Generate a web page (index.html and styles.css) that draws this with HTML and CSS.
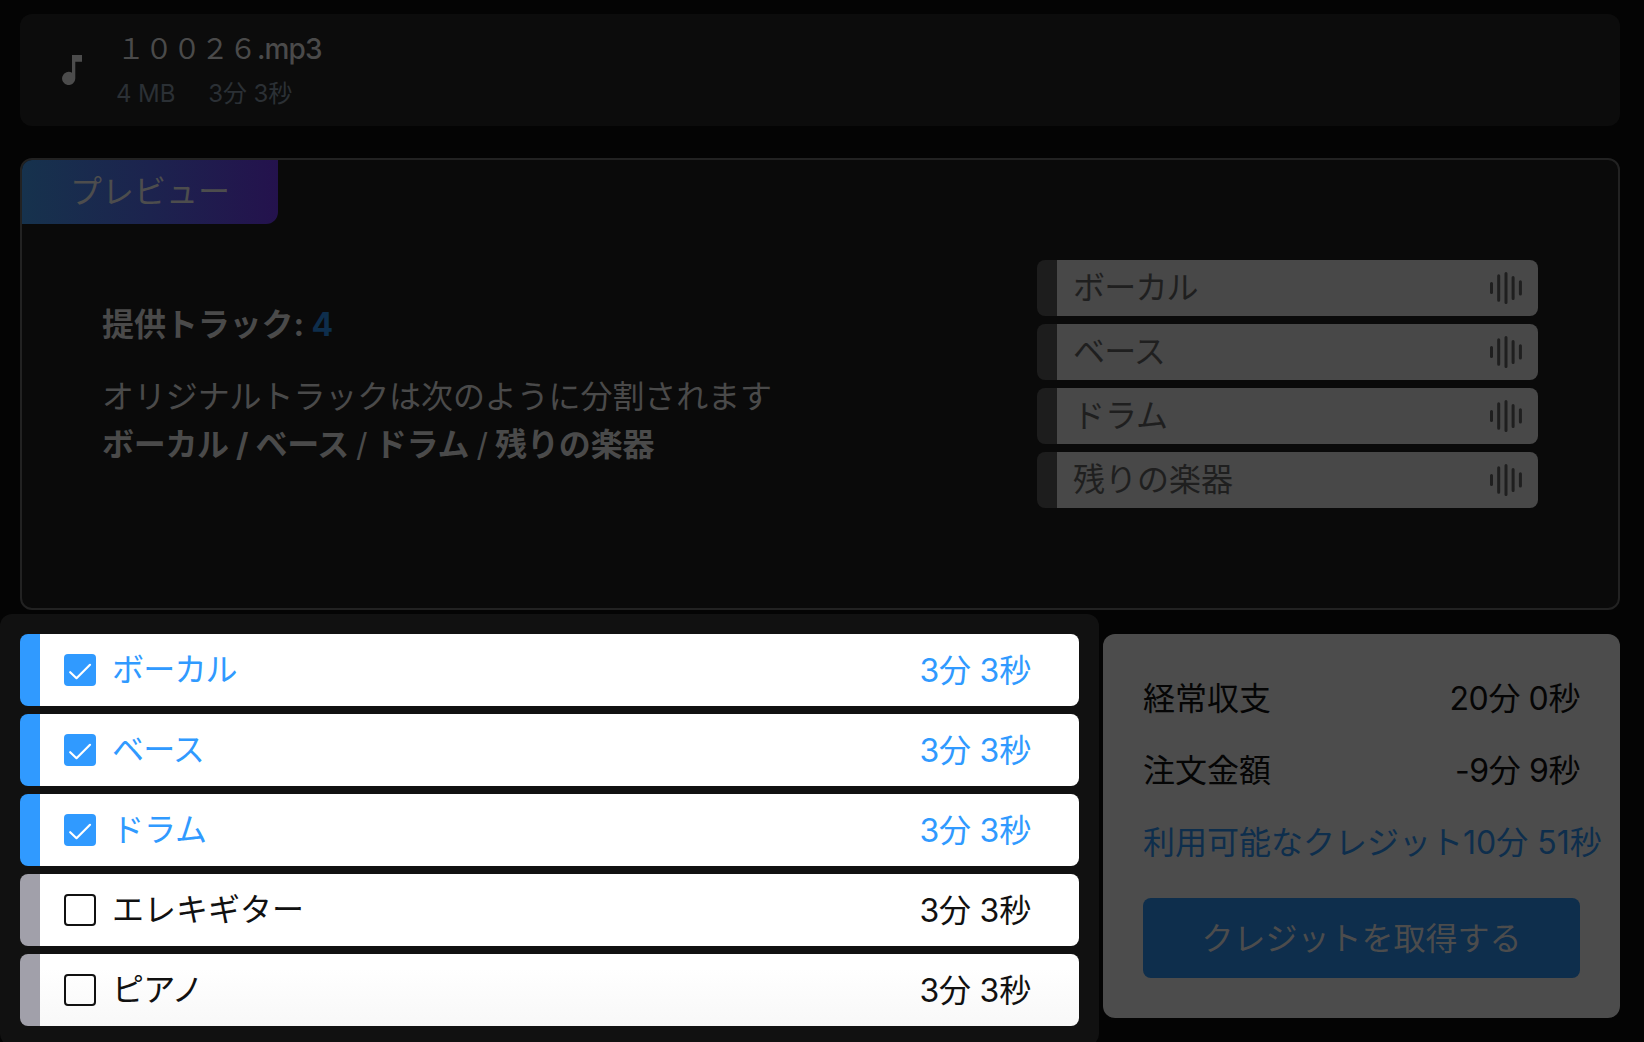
FILE: index.html
```html
<!DOCTYPE html>
<html lang="ja">
<head>
<meta charset="utf-8">
<title>プレビュー</title>
<link rel="stylesheet" href="styles.css">
</head>
<body>
<svg class="symbols" width="0" height="0">
  <symbol id="wave" viewBox="0 0 32 32">
    <path d="M1.5 11.5v9M8.7 3.8v24.4M16 1.5v29M23.1 5.5v21M30.4 9.8v12.2" fill="none" stroke="currentColor" stroke-width="3" stroke-linecap="round"/>
  </symbol>
  <symbol id="check" viewBox="0 0 32 32">
    <path d="M6.2 18.2l6.3 6L26 10.8" fill="none" stroke="currentColor" stroke-width="2.2" stroke-linecap="round" stroke-linejoin="round"/>
  </symbol>
</svg>
<main class="page">
  <section class="file">
    <svg class="note" width="20" height="30" viewBox="0 0 20 30"><path d="M10 0v17.7A6.6 6.6 0 1 0 13.3 23.4V6.7H20V0z" fill="currentColor"/></svg>
    <div>
      <div class="file-name">１００２６<span class="ext">.mp3</span></div>
      <div class="file-meta"><span>4 MB</span><span>3分 3秒</span></div>
    </div>
  </section>

  <section class="preview">
    <div class="tag">プレビュー</div>
    <div class="preview-body">
      <div class="summary">
        <h2>提供トラック: <span class="count">4</span></h2>
        <p>オリジナルトラックは次のように分割されます</p>
        <p class="parts"><b class="kana">ボーカル / ベース</b> / <b>ドラム</b> / <b>残りの楽器</b></p>
      </div>
      <ul class="tracks">
        <li><span class="kana">ボーカル</span><svg width="32" height="32"><use href="#wave"/></svg></li>
        <li><span class="kana">ベース</span><svg width="32" height="32"><use href="#wave"/></svg></li>
        <li><span>ドラム</span><svg width="32" height="32"><use href="#wave"/></svg></li>
        <li><span>残りの楽器</span><svg width="32" height="32"><use href="#wave"/></svg></li>
      </ul>
    </div>
  </section>

  <div class="lower">
    <ul class="options">
      <li class="on"><span class="box"><svg width="32" height="32"><use href="#check"/></svg></span><span class="kana">ボーカル</span><span class="time">3分 3秒</span></li>
      <li class="on"><span class="box"><svg width="32" height="32"><use href="#check"/></svg></span><span class="kana">ベース</span><span class="time">3分 3秒</span></li>
      <li class="on"><span class="box"><svg width="32" height="32"><use href="#check"/></svg></span><span>ドラム</span><span class="time">3分 3秒</span></li>
      <li><span class="box"></span><span>エレキギター</span><span class="time">3分 3秒</span></li>
      <li class="last"><span class="box"></span><span class="kana">ピアノ</span><span class="time">3分 3秒</span></li>
    </ul>
    <aside class="credits">
      <div class="row"><span>経常収支</span><span class="amount">20分 0秒</span></div>
      <div class="row"><span>注文金額</span><span class="amount">-9分 9秒</span></div>
      <div class="row available"><span>利用可能なクレジット</span><span>10分 51秒</span></div>
      <button class="buy" type="button">クレジットを取得する</button>
    </aside>
  </div>
</main>
</body>
</html>
```
FILE: styles.css
```css
* { box-sizing: border-box; }
html, body { margin: 0; height: 100%; }
body {
  background: #040404;
  color: #4a4a4a;
  font: 32px/48px Inter, "Noto Sans CJK JP", sans-serif;
  overflow: hidden;
}
ul { list-style: none; margin: 0; padding: 0; }
h2, p { margin: 0; }
.symbols { display: none; }
.page { height: 1042px; padding-top: 14px; overflow: hidden; }
.kana { letter-spacing: -0.8px; }

.file {
  display: flex;
  align-items: center;
  height: 112px;
  margin: 0 24px 32px 20px;
  padding-left: 42px;
  background: #0c0c0c;
  border-radius: 12px;
}
.note { margin-right: 34px; color: #4c4c4c; }
.file-name { padding-left: 1px; font-size: 28px; line-height: 42px; }
.ext { font-weight: 500; letter-spacing: -0.9px; }
.file-name, .file-meta { white-space: nowrap; }
.file-meta {
  display: flex;
  gap: 33px;
  padding-top: 6px;
  font-size: 24px;
  line-height: 36px;
  letter-spacing: -0.1px;
  color: #2b3035;
}

.preview {
  height: 452px;
  margin: 0 24px 0 20px;
  background: #0a0a0a;
  border: 2px solid #222;
  border-radius: 12px;
  overflow: hidden;
}
.tag {
  width: 256px;
  height: 64px;
  padding-left: 48px;
  line-height: 64px;
  color: #4d4d4d;
  background: linear-gradient(90deg, #16324d, #1c234e 50%, #24124d);
  border-radius: 0 0 12px 0;
}
.preview-body { display: flex; justify-content: space-between; padding: 36px 80px 0 80px; }
.summary { padding-top: 41px; }
.summary h2 { margin-bottom: 24px; font-size: 32px; line-height: 48px; font-weight: 700; letter-spacing: -0.1px; }
.summary p { letter-spacing: -0.1px; }
.summary .parts { word-spacing: -1.8px; }
.parts .kana { letter-spacing: -0.3px; word-spacing: 0; }
.count { color: #0e2e4c; }
.tracks { display: flex; flex-direction: column; gap: 8px; width: 501px; }
.tracks li {
  display: flex;
  align-items: center;
  justify-content: space-between;
  height: 56px;
  padding: 0 16px;
  color: #1f1f1f;
  background: #484848;
  border-left: 20px solid #1d1d1d;
  border-radius: 8px;
}

.lower { display: flex; gap: 4px; margin-top: 4px; }
.options {
  display: flex;
  flex-direction: column;
  gap: 8px;
  width: 1099px;
  height: 432px;
  padding: 20px;
  background: #111;
  border-radius: 12px;
}
.options li {
  display: flex;
  align-items: center;
  height: 72px;
  padding: 0 48px 0 24px;
  color: #111;
  background: #fff;
  border-left: 20px solid #a1a0aa;
  border-radius: 8px;
}
.options .on { color: #309aff; border-left-color: #309aff; }
.options .last { background: linear-gradient(#fff 20%, #f8f8f8); }
.box {
  display: flex;
  width: 32px;
  height: 32px;
  margin-right: 16px;
  border: 2px solid #111;
  border-radius: 4px;
}
.on .box { color: #fff; background: #309aff; border: 0; }
.time { margin-left: auto; padding-top: 1px; letter-spacing: -0.2px; }

.credits {
  width: 517px;
  height: 384px;
  margin-top: 20px;
  padding: 41px 40px 39px;
  color: #050505;
  background: #4c4c4c;
  border-radius: 12px;
}
.row { display: flex; justify-content: space-between; margin-bottom: 24px; white-space: nowrap; }
.amount { letter-spacing: -0.4px; }
.available { color: #0e2e4c; margin-bottom: 31px; }
.buy {
  display: block;
  width: 100%;
  height: 80px;
  padding: 1px 0 0;
  border: 0;
  border-radius: 8px;
  font: inherit;
  color: #4c4c4c;
  background: #0e2e4c;
}
```
